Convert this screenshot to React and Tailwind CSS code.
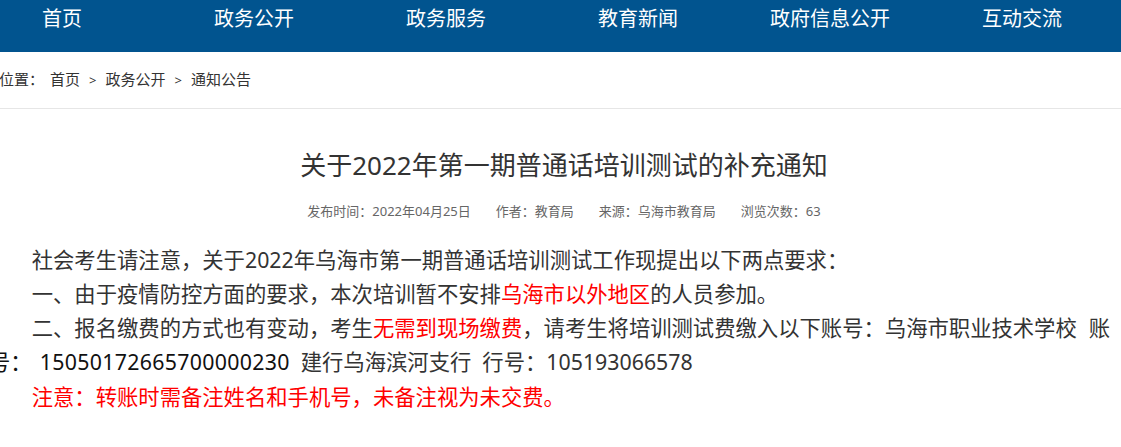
const navItems = ['首页', '政务公开', '政务服务', '教育新闻', '政府信息公开', '互动交流'];

const font = 'font-["Noto_Sans","Noto_Sans_CJK_SC",sans-serif]';

// wide gap, like the source page's spaces
const Gap = ({ w = 'w-[11px]' }) => <span className={`inline-block ${w}`} />;

function Nav() {
  return (
    <nav className="h-[52px] bg-[#01548f]">
      <ul className="flex -ml-[34px]">
        {navItems.map((item) => (
          <li
            key={item}
            className="w-[192px] shrink-0 text-center text-[20px] leading-[37px] text-white"
          >
            {item}
          </li>
        ))}
      </ul>
    </nav>
  );
}

function Breadcrumb() {
  return (
    <div className="h-[57px] border-b border-[#e6e6e6]">
      <p className="-ml-[31px] whitespace-nowrap text-[15px] leading-[55px] text-[#333]">
        当前位置：
        <span className="ml-[6px]">首页</span>
        <span className="mx-[9px] text-[13px]">&gt;</span>
        <span>政务公开</span>
        <span className="mx-[9px] text-[13px]">&gt;</span>
        <span>通知公告</span>
      </p>
    </div>
  );
}

function Article() {
  return (
    <article className="-ml-[11px] w-[1150px] pt-[38px]">
      <h1 className="text-center text-[26px] leading-[36px] text-[#333]">
        关于2022年第一期普通话培训测试的补充通知
      </h1>
      <div className="mt-[18px] flex justify-center gap-[25px] text-[13px] leading-[20px] text-[#666]">
        <span>发布时间：2022年04月25日</span>
        <span>作者：教育局</span>
        <span>来源：乌海市教育局</span>
        <span>浏览次数：63</span>
      </div>
      <div className="mt-[22px] text-[21.33px] leading-[34.13px] text-[#333]">
        <p className="indent-[2em] whitespace-nowrap">
          社会考生请注意，关于2022年乌海市第一期普通话培训测试工作现提出以下两点要求：
        </p>
        <p className="indent-[2em] whitespace-nowrap">
          一、由于疫情防控方面的要求，本次培训暂不安排
          <span className="text-[#ff0000]">乌海市以外地区</span>
          的人员参加。
        </p>
        <p className="indent-[2em] whitespace-nowrap">
          二、报名缴费的方式也有变动，考生
          <span className="text-[#ff0000]">无需到现场缴费</span>
          ，请考生将培训测试费缴入以下账号：乌海市职业技术学校
          <Gap w="w-[12px]" />
          账
          <br />
          <span className="text-[#111]">
            号：<Gap w="w-[8px]" />
            <span className="tracking-[0.3px]">15050172665700000230</span>
          </span>
          <Gap />
          建行乌海滨河支行
          <Gap />
          行号：105193066578
        </p>
        <p className="indent-[2em] whitespace-nowrap text-[#ff0000]">
          注意：转账时需备注姓名和手机号，未备注视为未交费。
        </p>
      </div>
    </article>
  );
}

export default function App() {
  return (
    <div className={`${font} h-[447px] w-full overflow-hidden bg-white`}>
      <Nav />
      <Breadcrumb />
      <Article />
    </div>
  );
}
